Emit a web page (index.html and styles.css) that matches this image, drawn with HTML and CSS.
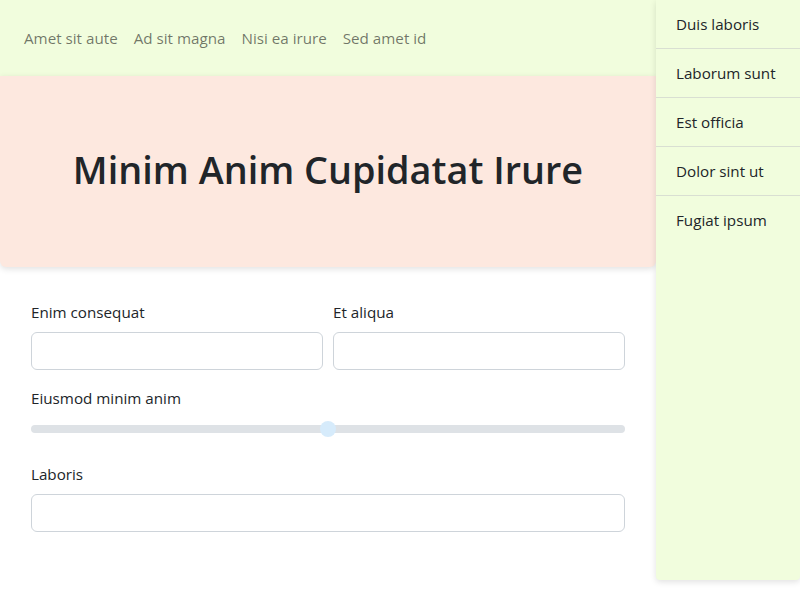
FILE: index.html
```html
<!DOCTYPE html>
<html lang="en">
<head>
<meta charset="utf-8">
<title>Page</title>
<link rel="stylesheet" href="styles.css">
</head>
<body>
<div class="layout">
  <div class="main">
    <nav class="navbar">
      <a class="nav-link" href="#">Amet sit aute</a>
      <a class="nav-link" href="#">Ad sit magna</a>
      <a class="nav-link" href="#">Nisi ea irure</a>
      <a class="nav-link" href="#">Sed amet id</a>
    </nav>
    <header class="hero">
      <h1 class="hero-title">Minim Anim Cupidatat Irure</h1>
    </header>
    <form class="form">
      <div class="row">
        <div class="field">
          <label class="label">Enim consequat</label>
          <input class="input" type="text">
        </div>
        <div class="field">
          <label class="label">Et aliqua</label>
          <input class="input" type="text">
        </div>
      </div>
      <div class="field range-field">
        <label class="label">Eiusmod minim anim</label>
        <input class="range" type="range" min="0" max="100" value="50">
      </div>
      <div class="field">
        <label class="label">Laboris</label>
        <input class="input" type="text">
      </div>
    </form>
  </div>
  <aside class="sidebar">
    <a class="side-item" href="#">Duis laboris</a>
    <a class="side-item" href="#">Laborum sunt</a>
    <a class="side-item" href="#">Est officia</a>
    <a class="side-item" href="#">Dolor sint ut</a>
    <a class="side-item" href="#">Fugiat ipsum</a>
  </aside>
</div>
</body>
</html>
```
FILE: styles.css
```css
* { box-sizing: border-box; }
html, body { margin: 0; padding: 0; }
body {
  font-family: "Open Sans", "Noto Sans", sans-serif;
  font-size: 15.2px;
  line-height: 24px;
  color: #212529;
  background: #fff;
  width: 800px;
  height: 600px;
  overflow: hidden;
}
.layout {
  display: flex;
  align-items: flex-start;
}
.main {
  width: 656px;
  flex: none;
}
.navbar {
  height: 76px;
  background: #f1fddd;
  display: flex;
  align-items: center;
  padding: 0 16px;
}
.nav-link {
  color: rgba(0, 0, 0, 0.55);
  text-decoration: none;
  padding: 8px 8px;
  white-space: nowrap;
}
.hero {
  height: 191px;
  background: #fde8df;
  border-radius: 0 0 6px 6px;
  box-shadow: 0 2px 6px rgba(0, 0, 0, 0.12);
  display: flex;
  align-items: center;
  justify-content: center;
  padding-bottom: 4px;
}
.hero-title {
  margin: 0;
  font-size: 37.8px;
  font-weight: 600;
  line-height: 1.2;
}
.form {
  padding: 33px 31px 0 31px;
  display: flex;
  flex-direction: column;
  gap: 16px;
}
.row {
  display: flex;
  gap: 10px;
}
.row .field { flex: 1; }
.field {
  display: flex;
  flex-direction: column;
}
.label {
  margin-bottom: 8px;
}
.input {
  height: 38px;
  border: 1px solid #ced4da;
  border-radius: 6px;
  background: #fff;
  font: inherit;
  padding: 6px 12px;
}
.range-field { margin-bottom: 9px; }
.range {
  -webkit-appearance: none;
  appearance: none;
  width: 100%;
  height: 16px;
  margin: 3px 0 0;
  background: transparent;
}
.range::-webkit-slider-runnable-track {
  height: 8px;
  background: #dee2e6;
  border-radius: 16px;
}
.range::-webkit-slider-thumb {
  -webkit-appearance: none;
  appearance: none;
  width: 16px;
  height: 16px;
  margin-top: -4px;
  border-radius: 50%;
  background: #d6ebfb;
  border: 0;
}
.sidebar {
  width: 144px;
  flex: none;
  height: 580px;
  background: #f1fddd;
  border-radius: 0 0 4px 4px;
  box-shadow: 0 2px 6px rgba(0, 0, 0, 0.12);
  display: flex;
  flex-direction: column;
}
.side-item {
  display: block;
  height: 49px;
  padding: 12px 20px 13px;
  color: #212529;
  text-decoration: none;
  white-space: nowrap;
  border-bottom: 1px solid #d9dfd2;
}
.side-item:last-child { border-bottom: 0; }
```
